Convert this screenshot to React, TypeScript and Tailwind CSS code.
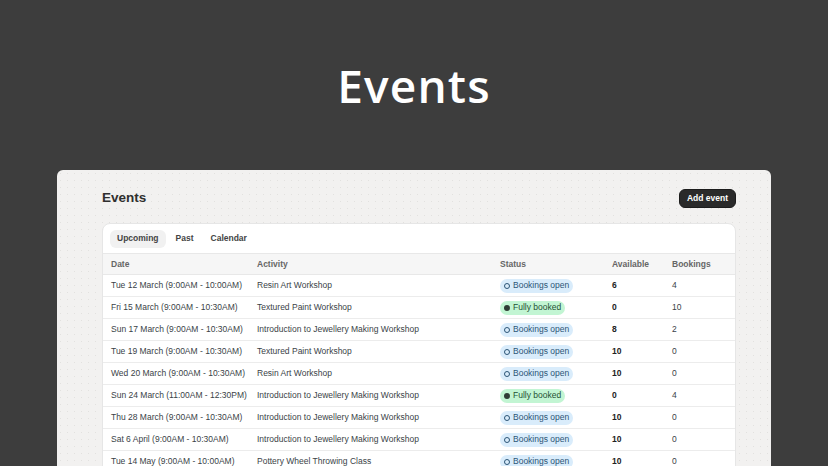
import { FC } from "react";

type Status = "open" | "full";

interface EventRow {
  date: string;
  activity: string;
  status: Status;
  available: number;
  bookings: number;
}

const events: EventRow[] = [
  { date: "Tue 12 March (9:00AM - 10:00AM)", activity: "Resin Art Workshop", status: "open", available: 6, bookings: 4 },
  { date: "Fri 15 March (9:00AM - 10:30AM)", activity: "Textured Paint Workshop", status: "full", available: 0, bookings: 10 },
  { date: "Sun 17 March (9:00AM - 10:30AM)", activity: "Introduction to Jewellery Making Workshop", status: "open", available: 8, bookings: 2 },
  { date: "Tue 19 March (9:00AM - 10:30AM)", activity: "Textured Paint Workshop", status: "open", available: 10, bookings: 0 },
  { date: "Wed 20 March (9:00AM - 10:30AM)", activity: "Resin Art Workshop", status: "open", available: 10, bookings: 0 },
  { date: "Sun 24 March (11:00AM - 12:30PM)", activity: "Introduction to Jewellery Making Workshop", status: "full", available: 0, bookings: 4 },
  { date: "Thu 28 March (9:00AM - 10:30AM)", activity: "Introduction to Jewellery Making Workshop", status: "open", available: 10, bookings: 0 },
  { date: "Sat 6 April (9:00AM - 10:30AM)", activity: "Introduction to Jewellery Making Workshop", status: "open", available: 10, bookings: 0 },
  { date: "Tue 14 May (9:00AM - 10:00AM)", activity: "Pottery Wheel Throwing Class", status: "open", available: 10, bookings: 0 },
];

const cols = "grid grid-cols-[146px_243px_112px_60px_1fr]";

const StatusBadge: FC<{ status: Status }> = ({ status }) =>
  status === "open" ? (
    <span className="inline-flex items-center gap-[3px] h-[14px] px-[4px] rounded-full bg-[#d9ecfb] text-[#2c5576]">
      <span className="w-[6px] h-[6px] rounded-full border border-[#2c5576]" />
      Bookings open
    </span>
  ) : (
    <span className="inline-flex items-center gap-[3px] h-[14px] px-[4px] rounded-full bg-[#c2f5d3] text-[#1f5133]">
      <span className="w-[6px] h-[6px] rounded-full bg-[#2f3d35]" />
      Fully booked
    </span>
  );

const App: FC = () => {
  return (
    <div className="h-[466px] overflow-hidden bg-[#3d3d3d] flex flex-col">
      <div className="h-[170px] shrink-0 flex items-center justify-center">
        <h1 className="font-['Open_Sans',sans-serif] font-semibold text-[46px] leading-none tracking-wide text-white">
          Events
        </h1>
      </div>
      <div className="mx-[57px] flex-1 rounded-t-md bg-[#f2f1f0] bg-[radial-gradient(#e2e1df_0.8px,transparent_0.8px)] bg-[size:7px_7px] pl-[45px] pr-[35px] pt-[18px] font-['Liberation_Sans',Arial,sans-serif]">
        <div className="flex items-center justify-between h-[20px]">
          <h2 className="text-[13.5px] font-bold text-[#2f2f2f]">Events</h2>
          <button className="h-[19px] px-[7px] rounded-md bg-[#2a2a2a] border border-[#1c1c1c] text-white text-[8.5px] font-bold">
            Add event
          </button>
        </div>
        <div className="mt-[15px] bg-white rounded-lg border border-[#e6e6e6] overflow-hidden">
          <div className="flex items-center gap-[3px] px-[7px] h-[29px]">
            <span className="h-[18px] px-[7px] flex items-center rounded-md bg-[#f1f1f1] text-[8.5px] font-bold text-[#444]">
              Upcoming
            </span>
            <span className="h-[18px] px-[7px] flex items-center text-[8.5px] font-bold text-[#444]">Past</span>
            <span className="h-[18px] px-[7px] flex items-center text-[8.5px] font-bold text-[#444]">Calendar</span>
          </div>
          <div className={`${cols} h-[22px] items-center bg-[#f6f6f6] border-y border-[#e8e8e8] text-[8.5px] font-bold text-[#666]`}>
            <span className="pl-[8px]">Date</span>
            <span className="pl-[8px]">Activity</span>
            <span className="pl-[8px]">Status</span>
            <span className="pl-[8px]">Available</span>
            <span className="pl-[8px]">Bookings</span>
          </div>
          {events.map((e, i) => (
            <div
              key={i}
              className={`${cols} h-[22px] items-center border-b border-[#ececec] text-[8.5px] text-[#3a3f47]`}
            >
              <span className="pl-[8px] whitespace-nowrap">{e.date}</span>
              <span className="pl-[8px] whitespace-nowrap">{e.activity}</span>
              <span className="pl-[8px] whitespace-nowrap">
                <StatusBadge status={e.status} />
              </span>
              <span className="pl-[8px] font-bold text-[#222]">{e.available}</span>
              <span className="pl-[8px]">{e.bookings}</span>
            </div>
          ))}
        </div>
      </div>
    </div>
  );
};

export default App;
